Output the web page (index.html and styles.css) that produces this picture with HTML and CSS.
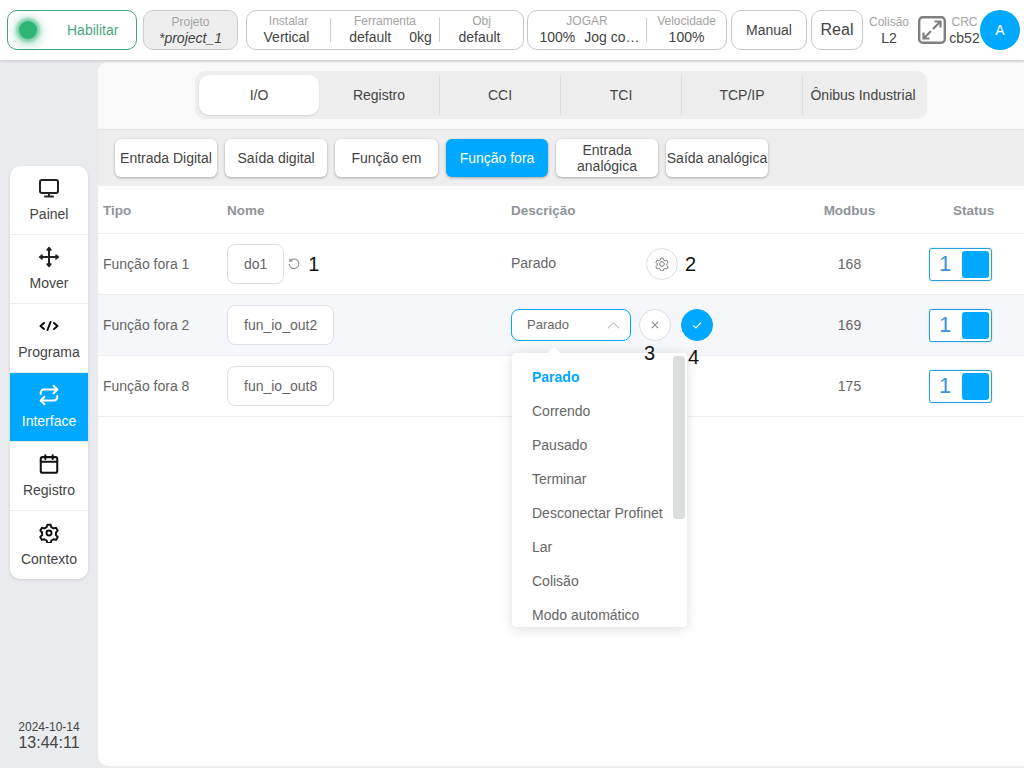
FILE: index.html
```html
<!DOCTYPE html>
<html lang="pt">
<head>
<meta charset="utf-8">
<title>Interface</title>
<link rel="stylesheet" href="styles.css">
</head>
<body>
<header class="topbar">
  <div class="enable"><span class="led"></span><span class="enable-label">Habilitar</span></div>
  <div class="project"><span class="cap">Projeto</span><em class="val proj-val">*project_1</em></div>
  <div class="group group-install">
    <div class="cell c-install"><span class="cap">Instalar</span><span class="val">Vertical</span></div>
    <div class="cell c-tool"><span class="cap">Ferramenta</span><span class="val tool-val"><span>default</span><span>0kg</span></span></div>
    <div class="cell c-obj"><span class="cap">Obj</span><span class="val">default</span></div>
  </div>
  <div class="group group-jog">
    <div class="cell c-jog"><span class="cap">JOGAR</span><span class="val tool-val"><span>100%</span><span>Jog co…</span></span></div>
    <div class="cell c-speed"><span class="cap">Velocidade</span><span class="val">100%</span></div>
  </div>
  <div class="pill pill-manual">Manual</div>
  <div class="pill pill-real">Real</div>
  <div class="stat stat-col"><span class="cap">Colisão</span><span class="val">L2</span></div>
  <svg class="expand" viewBox="0 0 28 28" fill="none" stroke="#7f7f7f" stroke-width="2.4">
    <rect x="1.200" y="1.200" width="25.600" height="25.600" rx="3.500"/>
    <path d="M16.500 5.500h6v6M22.500 5.500l-7.500 7.500M11.500 22.500h-6v-6M5.500 22.500l7.500-7.500" stroke-width="2.200"/>
  </svg>
  <div class="stat stat-crc"><span class="cap">CRC</span><span class="val">cb52</span></div>
  <div class="avatar">A</div>
</header>

<div class="body">
  <aside class="side">
    <nav class="nav">
      <a class="nav-item">
        <svg viewBox="0 0 24 24" fill="none" stroke="#222" stroke-width="2" stroke-linecap="round" stroke-linejoin="round"><rect x="3" y="4" width="18" height="13" rx="2"/><path d="M12 17v3M8 20.500h8"/></svg>
        <span>Painel</span>
      </a>
      <a class="nav-item">
        <svg viewBox="0 0 24 24" fill="#222" stroke="#222" stroke-width="2" stroke-linecap="round" stroke-linejoin="round"><path d="M12 4v16M4 12h16" fill="none"/><path d="M10 5 12 2.500 14 5ZM10 19l2 2.500 2-2.500ZM5 10 2.500 12 5 14ZM19 10l2.500 2-2.500 2Z" stroke-width="1.500"/></svg>
        <span>Mover</span>
      </a>
      <a class="nav-item">
        <svg viewBox="0 0 24 24" fill="none" stroke="#111" stroke-width="2" stroke-linecap="round" stroke-linejoin="round"><path d="M7 9 3.500 12 7 15M17 9l3.500 3-3.500 3M13.500 8l-3 8"/></svg>
        <span>Programa</span>
      </a>
      <a class="nav-item active">
        <svg class="icon-sm" viewBox="0 0 24 24" fill="none" stroke="#fff" stroke-width="2.200" stroke-linecap="round" stroke-linejoin="round"><path d="M17 2l4 4-4 4"/><path d="M3 11V9.500A3.500 3.500 0 0 1 6.500 6H21"/><path d="M7 22l-4-4 4-4"/><path d="M21 13v1.500a3.500 3.500 0 0 1-3.500 3.500H3"/></svg>
        <span>Interface</span>
      </a>
      <a class="nav-item">
        <svg class="icon-sm" viewBox="0 0 24 24" fill="none" stroke="#111" stroke-width="2.200" stroke-linecap="round" stroke-linejoin="round"><rect x="3" y="4.500" width="18" height="17" rx="2"/><path d="M16 2.500v4M8 2.500v4M3 9.500h18"/></svg>
        <span>Registro</span>
      </a>
      <a class="nav-item">
        <svg class="icon-gear" viewBox="0 0 24 24" fill="none" stroke="#111" stroke-width="2.300" stroke-linecap="round" stroke-linejoin="round"><circle cx="12" cy="12" r="3"/><path d="M10 2h4l.8 3 2.700 1.500 3-.8 2 3.500-2.200 2.200v3.200l2.200 2.200-2 3.500-3-.8-2.700 1.500-.8 3h-4l-.8-3-2.700-1.500-3 .8-2-3.500 2.200-2.200v-3.200L1.500 9.200l2-3.500 3 .8L9.200 5Z"/></svg>
        <span>Contexto</span>
      </a>
    </nav>
    <div class="clock"><span class="date">2024-10-14</span><span class="time">13:44:11</span></div>
  </aside>

  <main class="main">
    <div class="tabs-wrap">
      <div class="tabs">
        <div class="tab active">I/O</div>
        <div class="tab">Registro</div>
        <div class="tab sep">CCI</div>
        <div class="tab sep">TCI</div>
        <div class="tab sep">TCP/IP</div>
        <div class="tab sep">Ônibus Industrial</div>
      </div>
    </div>
    <div class="subtabs">
      <div class="sub">Entrada Digital</div>
      <div class="sub">Saída digital</div>
      <div class="sub sub-wide">Função em</div>
      <div class="sub active">Função fora</div>
      <div class="sub">Entrada analógica</div>
      <div class="sub">Saída analógica</div>
    </div>
    <div class="table">
      <div class="row head">
        <div>Tipo</div><div>Nome</div><div>Descrição</div><div class="center">Modbus</div><div class="status-head">Status</div>
      </div>
      <div class="row">
        <div>Função fora 1</div>
        <div class="name-cell"><span class="input">do1</span>
          <svg class="reset" viewBox="0 0 16 16" fill="none" stroke="#8a8a8a" stroke-width="1.200"><path d="M3.500 4.500A5.500 5.500 0 1 1 2.500 8"/><path d="M3.300 1.800v2.900h2.900"/></svg>
          <span class="note note-1">1</span></div>
        <div class="desc-cell"><span class="desc-text">Parado</span>
          <span class="round">
            <svg class="cog" viewBox="0 0 24 24" fill="none" stroke="#777" stroke-width="1.700" stroke-linejoin="round"><circle cx="12" cy="12" r="4"/><path d="M10 2h4l.8 3 2.700 1.500 3-.8 2 3.500-2.200 2.200v3.200l2.200 2.200-2 3.500-3-.8-2.700 1.500-.8 3h-4l-.8-3-2.700-1.500-3 .8-2-3.500 2.200-2.200v-3.200L1.500 9.200l2-3.500 3 .8L9.200 5Z"/></svg>
          </span>
          <span class="note note-2">2</span></div>
        <div class="center">168</div>
        <div><span class="switch"><span class="switch-num">1</span><span class="switch-box"></span></span></div>
      </div>
      <div class="row editing">
        <div>Função fora 2</div>
        <div><span class="input">fun_io_out2</span></div>
        <div class="desc-cell">
          <span class="select"><span class="select-text">Parado</span>
            <svg class="chev" viewBox="0 0 14 8" fill="none" stroke="#c0c4cc" stroke-width="1.200"><path d="M1 7.500 7 1.500 13 7.500"/></svg>
          </span>
          <span class="round cancel"><svg viewBox="0 0 16 16" fill="none" stroke="#888" stroke-width="1.200"><path d="M4.500 4.500l7 7M11.500 4.500l-7 7"/></svg></span>
          <span class="round ok"><svg viewBox="0 0 16 16" fill="none" stroke="#fff" stroke-width="1.300"><path d="M3.500 8.500 6.800 11.300 12.500 5.300"/></svg></span>
          <span class="note note-3">3</span>
          <span class="note note-4">4</span>
          <div class="dropdown">
            <span class="arrow"></span>
            <ul class="options">
              <li class="selected">Parado</li>
              <li>Correndo</li>
              <li>Pausado</li>
              <li>Terminar</li>
              <li>Desconectar Profinet</li>
              <li>Lar</li>
              <li>Colisão</li>
              <li>Modo automático</li>
            </ul>
            <span class="thumb"></span>
          </div>
        </div>
        <div class="center">169</div>
        <div><span class="switch"><span class="switch-num">1</span><span class="switch-box"></span></span></div>
      </div>
      <div class="row">
        <div>Função fora 8</div>
        <div><span class="input">fun_io_out8</span></div>
        <div></div>
        <div class="center">175</div>
        <div><span class="switch"><span class="switch-num">1</span><span class="switch-box"></span></span></div>
      </div>
    </div>
  </main>
</div>
</body>
</html>
```
FILE: styles.css
```css
* { box-sizing: border-box; }
html, body { margin: 0; height: 100%; }
body {
  width: 1024px;
  height: 768px;
  overflow: hidden;
  background: #e9ebee;
  font-family: "Liberation Sans", Arial, sans-serif;
  font-size: 14px;
  color: #333;
  display: flex;
  flex-direction: column;
}

/* Top bar */
.topbar {
  height: 60px;
  flex: none;
  background: #fff;
  display: flex;
  align-items: center;
  padding-left: 7px;
  box-shadow: 0 1px 3px rgba(0, 0, 0, .16);
  position: relative;
}
.cap { display: block; font-size: 12px; line-height: 15px; color: #a3a3a3; }
.val { display: block; font-size: 14px; line-height: 16px; color: #444; }
.proj-val { font-style: italic; line-height: 17px; }
.enable {
  width: 130px; height: 40px;
  border: 1px solid #3fa47e; border-radius: 10px;
  display: flex; align-items: center;
  padding-left: 11px;
  margin-right: 6px;
}
.led {
  width: 18px; height: 18px; flex: none;
  border-radius: 50%;
  background: #2cb574;
  box-shadow: 0 0 3px 3px rgba(44, 181, 116, .5), 0 2px 8px 6px rgba(44, 181, 116, .25);
}
.enable-label { margin-left: 30px; color: #4aa582; font-size: 14px; }
.project {
  width: 95px; height: 40px;
  background: #eee; border: 1px solid #ccc; border-radius: 10px;
  text-align: center; padding-top: 4px;
  margin-right: 8px;
}
.group {
  height: 40px;
  border: 1px solid #c8c8c8; border-radius: 10px;
  display: flex; align-items: center;
  text-align: center;
}
.group-install { width: 278px; margin-right: 3px; }
.group-jog { width: 200px; margin-right: 4px; }
.cell { height: 24px; display: flex; flex-direction: column; justify-content: center; border-left: 1px solid #ccc; white-space: nowrap; }
.cell:first-child { border-left: 0; }
.cell .cap { margin-top: -1px; }
.c-install { width: 83px; }
.c-install .val, .c-obj .val { padding-right: 4px; }
.c-tool { width: 109px; }
.c-obj { flex: 1; }
.c-jog { width: 118px; }
.c-speed { flex: 1; }
.tool-val { display: flex; justify-content: center; gap: 18px; padding-left: 11px; }
.c-jog .tool-val { gap: 9px; padding-left: 5px; }
.pill {
  height: 40px;
  border: 1px solid #c8c8c8; border-radius: 10px;
  display: flex; align-items: center; justify-content: center;
  color: #444; margin-right: 4px;
}
.pill-manual { width: 76px; }
.pill-real { width: 52px; font-size: 16px; margin-right: 2px; }
.stat { text-align: center; white-space: nowrap; }
.stat-col { width: 48px; margin-right: 5px; }
.stat-crc { width: 31px; }
.expand { width: 28px; height: 28px; flex: none; margin-right: 3px; }
.avatar {
  width: 40px; height: 40px; border-radius: 50%;
  background: #00a8ff; color: #fff;
  display: flex; align-items: center; justify-content: center;
}

/* Layout below the top bar */
.body { flex: 1; display: flex; min-height: 0; padding-top: 2px; }
.side { width: 98px; flex: none; display: flex; flex-direction: column; padding: 104px 0 0 10px; }
.nav {
  width: 78px;
  background: #fff; border-radius: 10px; overflow: hidden;
  box-shadow: 0 1px 3px rgba(0, 0, 0, .12);
}
.nav-item {
  height: 69px;
  display: flex; flex-direction: column; align-items: center;
  padding-top: 10px;
  border-bottom: 1px solid #eee;
  color: #444;
}
.nav-item:last-child { border-bottom: 0; height: 68px; }
.nav-item svg { width: 24px; height: 24px; margin-bottom: 5px; }
.nav-item .icon-sm { width: 22px; height: 22px; margin: 1px 0 6px; }
.nav-item .icon-gear { width: 20px; height: 20px; margin: 2px 0 7px; }
.nav-item span { line-height: 18px; }
.nav-item.active { background: #00a8ff; color: #fff; }
.clock { margin-top: auto; margin-left: -10px; margin-bottom: 16px; display: flex; flex-direction: column; align-items: center; color: #444; }
.date { font-size: 12px; line-height: 14px; }
.time { font-size: 16px; line-height: 18px; }

.main {
  flex: 1;
  background: #fff;
  border-radius: 10px 0 0 10px;
  overflow: hidden;
  margin-bottom: 2px;
  display: flex; flex-direction: column;
}
.tabs-wrap { height: 68px; flex: none; background: #f9f9f9; padding: 9px 0 0 97px; border-bottom: 1px solid #e4e4e4; }
.tabs {
  width: 732px; height: 48px;
  background: #eee; border-radius: 10px;
  display: flex; align-items: center; padding: 0 4px;
}
.tab { width: 120px; height: 40px; display: flex; align-items: center; justify-content: center; color: #444; white-space: nowrap; }
.tab.sep { width: 121px; border-left: 1px solid #ddd; }
.tab.active { background: #fff; border-radius: 10px; box-shadow: 0 1px 2px rgba(0, 0, 0, .1); }
.subtabs { height: 56px; flex: none; background: #eee; display: flex; gap: 8px; padding: 9px 0 0 17px; }
.sub {
  width: 102px; height: 38px;
  background: #fff; border-radius: 6px;
  box-shadow: 0 1px 3px rgba(0, 0, 0, .3);
  display: flex; align-items: center; justify-content: center;
  text-align: center; line-height: 16px; color: #444;
}
.sub-wide { width: 103px; }
.sub.active { background: #00a8ff; color: #fff; }

/* Table */
.row {
  display: grid;
  grid-template-columns: 124px 284px 259px 159px 1fr;
  align-items: center;
  height: 61px;
  padding-left: 5px;
  border-bottom: 1px solid #eee;
  font-size: 14px;
  color: #666;
}
.row.head { height: 48px; padding-top: 1px; font-weight: bold; font-size: 13.500px; color: #909399; }
.row.editing { background: #f5f7fa; }
.center { text-align: center; }
.status-head { padding-left: 24px; }
.input {
  display: inline-flex; align-items: center; justify-content: center;
  height: 40px; min-width: 57px; padding: 0 16px;
  background: #fff; border: 1px solid #dcdfe6; border-radius: 8px;
}
.name-cell, .desc-cell { display: flex; align-items: center; position: relative; }
.reset { width: 14px; height: 14px; margin-left: 3px; }
.note { font-size: 20px; line-height: 22px; color: #111; }
.note-1 { margin-left: 7px; }
.desc-text { width: 135px; padding-bottom: 2px; }
.note-2 { margin-left: 7px; }
.round {
  width: 32px; height: 32px; border-radius: 50%;
  border: 1px solid #dcdfe6; background: #fff;
  display: inline-flex; align-items: center; justify-content: center;
  flex: none;
}
.round svg { width: 14px; height: 14px; }
.select {
  width: 120px; height: 32px;
  background: #fff; border: 1px solid #00a8ff; border-radius: 8px;
  display: flex; align-items: center; padding-left: 15px;
  font-size: 13px; position: relative;
}
.select-text { padding-bottom: 2px; }
.chev { width: 13px; height: 8px; position: absolute; right: 10px; top: 11px; }
.cancel { margin-left: 8px; }
.ok { margin-left: 10px; background: #00a8ff; border-color: #00a8ff; }
.note-3 { position: absolute; left: 133px; top: 33px; z-index: 6; }
.note-4 { position: absolute; left: 177px; top: 37px; z-index: 6; }

/* Dropdown */
.dropdown {
  position: absolute; left: 1px; top: 44px; z-index: 5;
  width: 175px; height: 274px;
  background: #fff; border-radius: 4px;
  box-shadow: 0 2px 12px rgba(0, 0, 0, .14);
}
.arrow {
  position: absolute; left: 36px; top: -6px;
  width: 0; height: 0;
  border-left: 6px solid transparent; border-right: 6px solid transparent;
  border-bottom: 6px solid #fff;
}
.options { list-style: none; margin: 0; padding: 7px 0 0; height: 274px; overflow: hidden; }
.options li { height: 34px; line-height: 34px; padding-left: 20px; font-size: 14px; color: #666; white-space: nowrap; }
.options li.selected { color: #00a8ff; font-weight: bold; }
.thumb { position: absolute; right: 2px; top: 3px; width: 12px; height: 163px; background: #dcdddf; border-radius: 3px; }

/* Switch */
.switch {
  width: 63px; height: 33px;
  border: 1px solid #2a9fd8; border-radius: 3px;
  background: #fff;
  box-shadow: 0 0 2px rgba(0, 168, 255, .4);
  display: flex; align-items: center; justify-content: space-between;
  padding: 0 2px 0 9px;
}
.switch-num { font-size: 22px; color: #3d94dc; }
.switch-box { width: 27px; height: 27px; background: #00a8ff; border-radius: 3px; }
```
